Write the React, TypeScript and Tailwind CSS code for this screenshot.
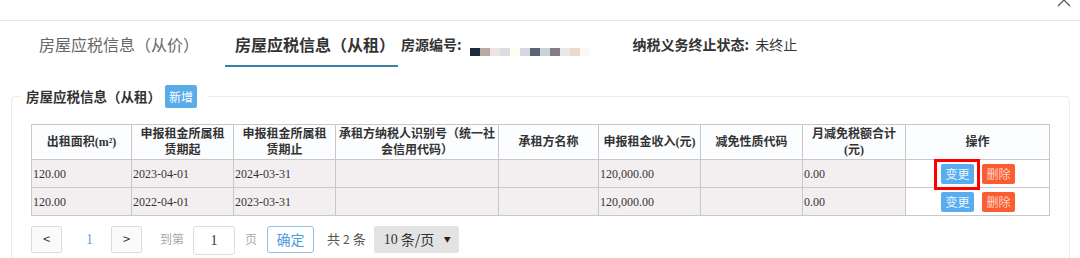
import React from "react";

const CJK = { fontFamily: '"Noto Sans CJK SC", "Noto Sans", sans-serif' };
const SERIF = { fontFamily: '"Liberation Serif", "Noto Sans CJK SC", serif' };

const BLUR = [
  "#1c2a3d", "#b8a9a5", "#ede4e8", "#dcdde4", "#fdfdef", "#d4d7e1",
  "#5a6677", "#ccd3d6", "#857c86", "#eae6ec", "#ebd9cd", "#fbf8f7",
];

const COLS = [100, 102, 102, 163, 100, 102, 102, 103, 144];

const HEADERS: React.ReactNode[] = [
  <>出租面积(m²)</>,
  <>申报租金所属租<br />赁期起</>,
  <>申报租金所属租<br />赁期止</>,
  <>承租方纳税人识别号（统一社<br />会信用代码）</>,
  <>承租方名称</>,
  <>申报租金收入(元)</>,
  <>减免性质代码</>,
  <>月减免税额合计<br />(元)</>,
  <>操作</>,
];

const ROWS = [
  ["120.00", "2023-04-01", "2024-03-31", "", "", "120,000.00", "", "0.00"],
  ["120.00", "2022-04-01", "2023-03-31", "", "", "120,000.00", "", "0.00"],
];

function ActionButtons({ marked }: { marked: boolean }) {
  return (
    <div className="flex items-center justify-center gap-[8px] pl-[1px]">
      <span className="relative">
        <button className="h-[20px] w-[33px] rounded-[2px] bg-[#58adf0] text-[12px] leading-[20px] text-[#eef6ff]" style={CJK}>
          变更
        </button>
        {marked && (
          <span className="pointer-events-none absolute -left-[7px] -right-[6px] -top-[5px] -bottom-[6px] border-[3px] border-[#ff0000]" />
        )}
      </span>
      <button className="h-[20px] w-[33px] rounded-[2px] bg-[#fb5d33] text-[12px] leading-[20px] text-[#ffd6c8]" style={CJK}>
        删除
      </button>
    </div>
  );
}

export default function App() {
  return (
    <div className="relative h-[258px] w-[1080px] overflow-hidden bg-white text-[#333]" style={CJK}>
      {/* close icon, cut off at the top */}
      <svg className="absolute left-[1057px] -top-[7px]" width="14" height="14" viewBox="0 0 14 14" fill="none" stroke="#555" strokeWidth="1.3">
        <path d="M1 1l12 12M13 1L1 13" />
      </svg>

      <div className="h-[21px] border-b border-[#e8e8e8]" />

      {/* tabs */}
      <div className="flex h-[46px] items-stretch">
        <div className="ml-[39px] flex items-center text-[16px] text-[#666]">房屋应税信息（从价）</div>
        <div className="ml-[26px] flex items-center border-b-[2px] border-[#3b7fab] pl-[10px] pr-[3px] pt-[2px] text-[16px] font-bold text-[#333]">
          房屋应税信息（从租）
        </div>
        <div className="ml-[3px] flex items-center text-[14px] font-bold text-[#333]">房源编号:</div>
        <div className="ml-[8px] mt-[27px] flex h-[8px]">
          {BLUR.map((c, i) => (
            <span key={i} className="h-[8px] w-[10px]" style={{ backgroundColor: c }} />
          ))}
        </div>
        <div className="ml-[43px] flex items-center text-[14px]">
          <span className="font-bold">纳税义务终止状态:</span>
          <span className="ml-[6px]">未终止</span>
        </div>
      </div>

      {/* fieldset */}
      <fieldset className="mx-[11px] mt-[18px] rounded-[4px] border border-[#ebebeb] px-[19px] pb-[20px]">
        <legend className="-ml-[10px] flex h-[23px] items-center pl-[5px] pr-[10px]">
          <span className="text-[13.5px] font-bold text-[#333]">房屋应税信息（从租）</span>
          <button className="ml-[4px] h-[23px] w-[32px] rounded-[2px] bg-[#5aabea] text-[12px] text-white" style={CJK}>
            新增
          </button>
        </legend>

        <table className="mt-[16px] w-[1018px] table-fixed border-collapse text-[12px]" style={SERIF}>
          <colgroup>
            {COLS.map((w, i) => (
              <col key={i} style={{ width: w }} />
            ))}
          </colgroup>
          <thead>
            <tr>
              {HEADERS.map((h, i) => (
                <th
                  key={i}
                  className="h-[35px] whitespace-nowrap border border-[#c8c8c8] bg-[#fbfdff] px-0 text-center align-middle text-[12px] font-bold leading-[16px] text-[#333]"
                >
                  {h}
                </th>
              ))}
            </tr>
          </thead>
          <tbody>
            {ROWS.map((r, ri) => (
              <tr key={ri}>
                {r.map((v, ci) => (
                  <td key={ci} className="h-[28px] border border-[#c8c8c8] bg-[#f3eff1] pl-[1px] text-left align-middle text-[12px] text-[#333]">
                    {v}
                  </td>
                ))}
                <td className="h-[28px] border border-[#c8c8c8] bg-white align-middle">
                  <ActionButtons marked={ri === 0} />
                </td>
              </tr>
            ))}
          </tbody>
        </table>

        {/* pagination */}
        <div className="mt-[7px] flex items-center text-[14px]">
          <button className="flex h-[27px] w-[31px] items-center justify-center rounded-[2px] border border-[#dcdcdc] bg-[#fafafa] text-[13px] text-[#333]">
            &lt;
          </button>
          <span className="ml-[24px] w-[25px] text-[#5aa5e0]" style={SERIF}>1</span>
          <button className="flex h-[27px] w-[31px] items-center justify-center rounded-[2px] border border-[#dcdcdc] bg-[#fafafa] text-[13px] text-[#333]">
            &gt;
          </button>
          <span className="ml-[18px] text-[12px] text-[#aaa]">到第</span>
          <div className="ml-[9px] mt-[3px] flex h-[29px] w-[42px] items-center justify-center rounded-[3px] border border-[#dcdcdc] text-[14px] text-[#333]" style={SERIF}>
            1
          </div>
          <span className="ml-[10px] text-[12px] text-[#aaa]">页</span>
          <button className="ml-[10px] h-[27px] w-[47px] rounded-[3px] border border-[#8ec2ea] bg-white text-[14px] text-[#4a9ee0]" style={CJK}>
            确定
          </button>
          <span className="ml-[13px] text-[13px] text-[#555]">
            共<span className="mx-[3px] text-[12px]">2</span>条
          </span>
          <div className="ml-[8px] flex h-[27px] w-[85px] items-center rounded-[2px] bg-[#e3e3e3] pl-[10px] pr-[8px] text-[14px] text-[#333]">
            <span style={SERIF}>10</span>
            <span className="ml-[3px]">条/页</span>
            <span className="ml-auto text-[7px] text-[#222]">▼</span>
          </div>
        </div>
      </fieldset>
    </div>
  );
}
